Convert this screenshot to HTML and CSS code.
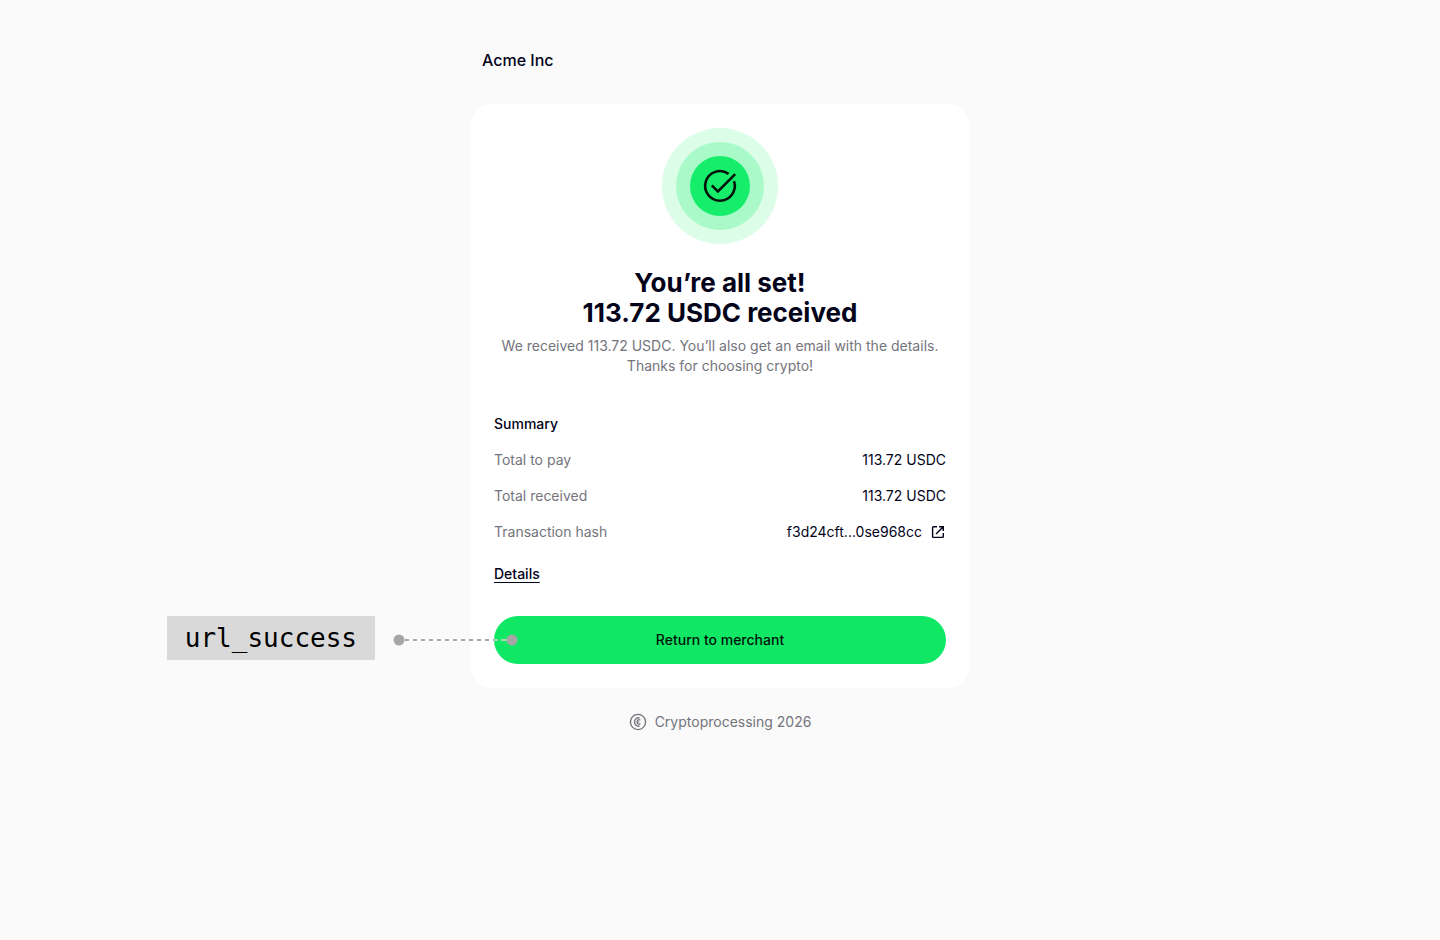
FILE: index.html
```html
<!DOCTYPE html>
<html lang="en">
  <head>
    <meta charset="UTF-8" />
    <meta name="viewport" content="width=device-width, initial-scale=1.0" />
    <title>Payment received</title>
    <link rel="stylesheet" href="styles.css">
  </head>
  <body>
    <div class="page">
      <header class="merchant">Acme Inc</header>

      <main class="card">
        <div class="status">
          <div class="status-ring">
            <div class="status-dot">
              <svg width="36" height="36" viewBox="0 0 36 36" fill="none" stroke="#03140b" stroke-width="2.6">
                <path d="M26.6 5.9A14.8 14.8 0 1 0 32 13.2" />
                <path d="M9.8 17.4L15.9 23.5L33.2 6.2" />
              </svg>
            </div>
          </div>
        </div>

        <h1 class="title">You’re all set!<br />113.72 USDC received</h1>
        <p class="lead">
          We received 113.72 USDC. You’ll also get an email with the details.
          Thanks for choosing crypto!
        </p>

        <h2 class="summary-title">Summary</h2>
        <dl class="summary">
          <div class="row">
            <dt>Total to pay</dt>
            <dd>113.72 USDC</dd>
          </div>
          <div class="row">
            <dt>Total received</dt>
            <dd>113.72 USDC</dd>
          </div>
          <div class="row">
            <dt>Transaction hash</dt>
            <dd>
              f3d24cft...0se968cc
              <a href="#" class="hash-link" aria-label="Open transaction">
                <svg width="16" height="16" viewBox="0 0 16 16" fill="none" stroke="#03031a" stroke-width="1.4">
                  <path d="M7 2.7H3.4A.8 .8 0 0 0 2.6 3.5V12.6A.8 .8 0 0 0 3.4 13.4H12.5A.8 .8 0 0 0 13.3 12.6V9" />
                  <path d="M9 2.7H13.3V7M13.1 2.9L6 10" />
                </svg>
              </a>
            </dd>
          </div>
        </dl>
        <a href="#" class="details">Details</a>

        <div class="action">
          <button type="button" class="btn">Return to merchant</button>
          <div class="callout">
            <code class="callout-label">url_success</code>
            <svg width="125" height="48" viewBox="0 0 125 48" fill="#a6a6a6">
              <path d="M12 24H101" stroke="#a6a6a6" stroke-width="2" stroke-dasharray="4 4" />
              <path d="M101 24H105M108 24H114" stroke="#a9d9b9" stroke-width="2" />
              <circle cx="6" cy="24" r="5.5" />
              <circle cx="119" cy="24" r="5.5" />
            </svg>
          </div>
        </div>
      </main>

      <footer class="footer">
        <svg width="18" height="18" viewBox="0 0 18 18" fill="none" stroke="#74747c" stroke-width="1.4">
          <circle cx="9" cy="9" r="7.6" />
          <path d="M10.6 4.9A4.2 4.2 0 1 0 10.6 13.1" />
          <path d="M11.4 7.2A2.2 2.2 0 1 0 11.4 10.8M7.6 9H10.4" stroke-width="1.2" />
        </svg>
        Cryptoprocessing 2026
      </footer>
    </div>
  </body>
</html>
```
FILE: styles.css
```css
body {
  margin: 0;
  background-color: #fafafa;
  color: #03031a;
  font-family: Inter, "Liberation Sans", sans-serif;
  font-size: 14px;
  line-height: 20px;
}
.page {
  max-width: 500px;
  margin: 0 auto;
  padding: 48px 0;
}
.merchant {
  padding: 0 12px;
  margin-bottom: 32px;
  font-size: 16px;
  font-weight: 500;
  line-height: 24px;
}
.card {
  padding: 24px;
  border-radius: 24px;
  background-color: #fff;
}
.status,
.status-ring,
.status-dot {
  display: flex;
  align-items: center;
  justify-content: center;
  border-radius: 50%;
}
.status {
  width: 116px;
  height: 116px;
  margin: 0 auto 24px;
  background-color: #dcfde8;
}
.status-ring {
  width: 88px;
  height: 88px;
  background-color: #aaf9c8;
}
.status-dot {
  width: 60px;
  height: 60px;
  background-color: #16ee6b;
}
.title {
  margin: 0 0 8px;
  font-size: 26px;
  font-weight: 700;
  line-height: 30px;
  text-align: center;
}
.lead {
  margin: 0 0 38px;
  color: #74747c;
  text-align: center;
}
.summary-title {
  margin: 0 0 16px;
  font-size: 14px;
  font-weight: 500;
}
.summary {
  display: flex;
  flex-direction: column;
  gap: 16px;
  margin: 0 0 22px;
}
.row {
  display: flex;
  justify-content: space-between;
}
.row dt {
  color: #74747c;
}
.row dd {
  display: flex;
  align-items: center;
  gap: 8px;
  margin: 0;
}
.hash-link {
  display: flex;
}
.details {
  display: block;
  width: fit-content;
  margin-bottom: 32px;
  color: #03031a;
  font-weight: 500;
  text-decoration: underline;
  text-decoration-thickness: 1px;
  text-underline-offset: 3px;
}
.action {
  position: relative;
}
.btn {
  display: block;
  width: 100%;
  height: 48px;
  padding: 0;
  border: none;
  border-radius: 24px;
  background-color: #0ee865;
  color: #03140b;
  font-family: inherit;
  font-size: 14px;
  font-weight: 500;
  line-height: 48px;
  cursor: pointer;
}
/* note pinned to the left edge of the button */
.callout {
  position: absolute;
  top: 0;
  right: calc(100% - 24px);
  display: flex;
  align-items: flex-start;
  gap: 18px;
}
.callout-label {
  padding: 0 18px;
  background-color: #d9d9d9;
  color: #000;
  font-family: "DejaVu Sans Mono", monospace;
  font-size: 26px;
  line-height: 44px;
}
.footer {
  display: flex;
  align-items: center;
  justify-content: center;
  gap: 8px;
  margin-top: 24px;
  color: #74747c;
}
```
